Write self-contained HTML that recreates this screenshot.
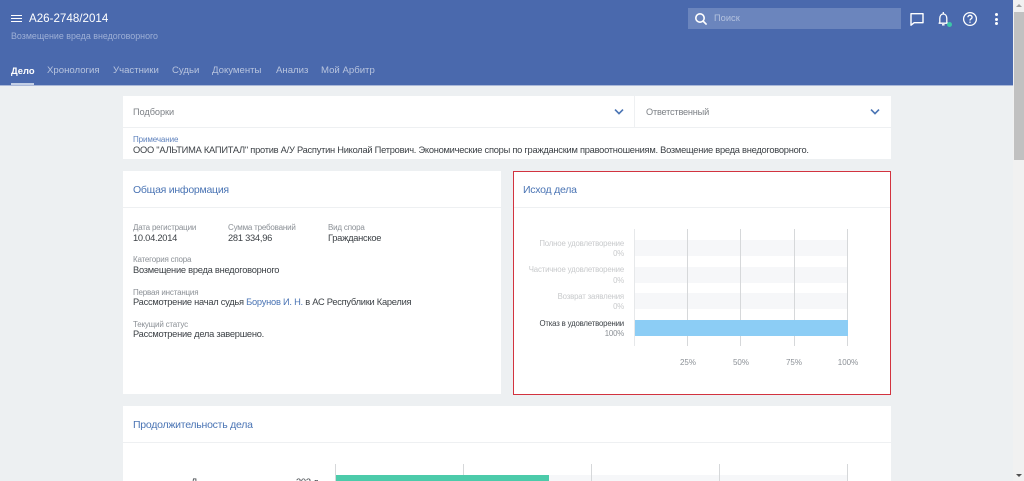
<!DOCTYPE html>
<html lang="ru"><head><meta charset="utf-8"><title>А26-2748/2014</title>
<style>
html,body{margin:0;padding:0;width:1024px;height:481px;overflow:hidden;background:#edf0f2;font-family:"Liberation Sans","Noto Sans CJK SC",sans-serif;color:#3c4146}
#w{position:absolute;left:0;top:0;width:1024px;height:481px;overflow:hidden}
.a{position:absolute;white-space:nowrap}
.box{position:absolute;background:#fff}
.h{font-size:10.5px;letter-spacing:-.25px;color:#4a74b4;line-height:14px}
.l{font-size:8px;letter-spacing:-.2px;color:#8b9096;line-height:10px}
.v{font-size:9.3px;letter-spacing:-.25px;color:#3c4146;line-height:12px}
.t{font-size:9.6px;color:#b8c4de;line-height:12px;top:65px}
.r{font-size:7.8px;letter-spacing:-.17px;line-height:10px;text-align:right;color:#c8cacc;width:200px;left:424px}
.g{position:absolute;width:1px;background:#d6d8da}
.s{position:absolute;left:635px;width:213px;height:16px;background:#f6f7f9}
.x{font-size:8px;color:#8b9096;line-height:10px;top:358px;width:40px;text-align:center}
</style></head><body><div id="w">
<div class="box" style="left:0;top:0;width:1013px;height:85px;background:#4a69ad"></div>
<div class="box" style="left:0;top:85px;width:1013px;height:1px;background:#aab8d8"></div>
<div class="box" style="left:11px;top:15px;width:11px;height:1px;background:#fff"></div>
<div class="box" style="left:11px;top:18px;width:11px;height:1px;background:#fff"></div>
<div class="box" style="left:11px;top:21px;width:11px;height:1px;background:#fff"></div>
<div class="a" style="left:29px;top:12px;font-size:11.6px;line-height:14px;color:#fff">А26-2748/2014</div>
<div class="a" style="left:11px;top:31px;font-size:8.9px;line-height:11px;color:#9eb0d6">Возмещение вреда внедоговорного</div>
<div class="a t" style="left:11px;color:#fff;font-weight:bold;font-size:9.4px">Дело</div>
<div class="box" style="left:11px;top:83px;width:23px;height:2px;background:#c3cfe6"></div>
<div class="a t" style="left:47px">Хронология</div>
<div class="a t" style="left:113px">Участники</div>
<div class="a t" style="left:172px">Судьи</div>
<div class="a t" style="left:212px">Документы</div>
<div class="a t" style="left:276px">Анализ</div>
<div class="a t" style="left:321px">Мой Арбитр</div>
<div class="box" style="left:688px;top:8px;width:213px;height:21px;background:#6b85bd"></div>
<svg class="a" style="left:693px;top:11px" width="16" height="16" viewBox="0 0 16 16" fill="none" stroke="#fff" stroke-width="1.6"><circle cx="7" cy="7" r="4.2"/><path d="M10 10l3.6 3.6"/></svg>
<div class="a" style="left:714px;top:13px;font-size:9.3px;line-height:11px;color:#b4c2de">Поиск</div>
<svg class="a" style="left:908px;top:10px" width="18" height="18" viewBox="0 0 18 18" fill="none" stroke="#fff" stroke-width="1.4"><path d="M3 3.7h12v9H6.2L3 15.2z" stroke-linejoin="round"/></svg>
<svg class="a" style="left:935px;top:10px" width="18" height="18" viewBox="0 0 18 18" fill="none" stroke="#fff" stroke-width="1.3"><path d="M3.6 13.2h9.4M4.8 13V8.4c0-2.6 1.4-4.4 3.5-4.4s3.5 1.8 3.5 4.4V13" /><path d="M8.3 2v2M7 14.8h2.6"/></svg>
<div class="box" style="left:947px;top:22px;width:5px;height:5px;border-radius:50%;background:#3cc6a8"></div>
<svg class="a" style="left:961px;top:10px" width="18" height="18" viewBox="0 0 18 18" fill="none" stroke="#fff" stroke-width="1.3"><circle cx="9" cy="9" r="6.4"/><path d="M6.9 7.3c0-1.2.9-2 2.1-2s2.1.8 2.1 1.9c0 1.5-2.1 1.6-2.1 3.3"/><path d="M9 11.6v1.2"/></svg>
<div class="box" style="left:995px;top:13px;width:3px;height:3px;border-radius:50%;background:#fff"></div>
<div class="box" style="left:995px;top:17.5px;width:3px;height:3px;border-radius:50%;background:#fff"></div>
<div class="box" style="left:995px;top:22px;width:3px;height:3px;border-radius:50%;background:#fff"></div>

<div class="box" style="left:123px;top:96px;width:768px;height:63px"></div>
<div class="box" style="left:123px;top:127px;width:768px;height:1px;background:#eef0f2"></div>
<div class="box" style="left:634px;top:96px;width:1px;height:31px;background:#eef0f2"></div>
<div class="a" style="left:133px;top:106px;font-size:9.2px;letter-spacing:-.05px;line-height:12px;color:#7d8186">Подборки</div>
<div class="a" style="left:646px;top:106px;font-size:9.2px;letter-spacing:-.2px;line-height:12px;color:#7d8186">Ответственный</div>
<svg class="a" style="left:613px;top:108px" width="12" height="8" viewBox="0 0 12 8" fill="none" stroke="#4a74b4" stroke-width="1.6"><path d="M2 1.6l4 4 4-4"/></svg>
<svg class="a" style="left:869px;top:108px" width="12" height="8" viewBox="0 0 12 8" fill="none" stroke="#4a74b4" stroke-width="1.6"><path d="M2 1.6l4 4 4-4"/></svg>
<div class="a" style="left:133px;top:135px;font-size:8px;letter-spacing:-.1px;line-height:10px;color:#5f82bd">Примечание</div>
<div class="a v" style="left:133px;top:144px">ООО "АЛЬТИМА КАПИТАЛ" против А/У Распутин Николай Петрович. Экономические споры по гражданским правоотношениям. Возмещение вреда внедоговорного.</div>

<div class="box" style="left:123px;top:171px;width:378px;height:223px"></div>
<div class="box" style="left:123px;top:207px;width:378px;height:1px;background:#eef0f2"></div>
<div class="a h" style="left:133px;top:183px">Общая информация</div>
<div class="a l" style="left:133px;top:223px">Дата регистрации</div>
<div class="a v" style="left:133px;top:232px">10.04.2014</div>
<div class="a l" style="left:228px;top:223px">Сумма требований</div>
<div class="a v" style="left:228px;top:232px">281 334,96</div>
<div class="a l" style="left:328px;top:223px">Вид спора</div>
<div class="a v" style="left:328px;top:232px">Гражданское</div>
<div class="a l" style="left:133px;top:255px">Категория спора</div>
<div class="a v" style="left:133px;top:264px">Возмещение вреда внедоговорного</div>
<div class="a l" style="left:133px;top:288px">Первая инстанция</div>
<div class="a v" style="left:133px;top:296px">Рассмотрение начал судья <span style="color:#4a74b4">Борунов И. Н.</span> в АС Республики Карелия</div>
<div class="a l" style="left:133px;top:320px">Текущий статус</div>
<div class="a v" style="left:133px;top:328px">Рассмотрение дела завершено.</div>

<div class="box" style="left:513px;top:171px;width:376px;height:222px;border:1px solid #d2333f"></div>
<div class="box" style="left:514px;top:207px;width:376px;height:1px;background:#eef0f2"></div>
<div class="a h" style="left:523px;top:183px">Исход дела</div>
<div class="s" style="top:240px"></div><div class="s" style="top:267px"></div><div class="s" style="top:293px"></div>
<div class="g" style="left:634px;top:229px;height:117px;background:#e6e8ea"></div>
<div class="g" style="left:687px;top:229px;height:117px"></div>
<div class="g" style="left:740px;top:229px;height:117px"></div>
<div class="g" style="left:794px;top:229px;height:117px"></div>
<div class="g" style="left:847px;top:229px;height:117px"></div>
<div class="box" style="left:635px;top:320px;width:213px;height:16px;background:#8ccdf5"></div>
<div class="a r" style="top:239px">Полное удовлетворение</div><div class="a r" style="top:249px">0%</div>
<div class="a r" style="top:265px">Частичное удовлетворение</div><div class="a r" style="top:276px">0%</div>
<div class="a r" style="top:292px">Возврат заявления</div><div class="a r" style="top:302px">0%</div>
<div class="a r" style="top:319px;color:#3c4146">Отказ в удовлетворении</div><div class="a r" style="top:329px;color:#8b9096">100%</div>
<div class="a x" style="left:668px">25%</div>
<div class="a x" style="left:721px">50%</div>
<div class="a x" style="left:774px">75%</div>
<div class="a x" style="left:828px">100%</div>

<div class="box" style="left:123px;top:406px;width:768px;height:75px"></div>
<div class="box" style="left:123px;top:442px;width:768px;height:1px;background:#eef0f2"></div>
<div class="a h" style="left:133px;top:418px">Продолжительность дела</div>
<div class="box" style="left:336px;top:475px;width:512px;height:6px;background:#f6f7f9"></div>
<div class="g" style="left:335px;top:464px;height:17px"></div>
<div class="g" style="left:463px;top:464px;height:17px"></div>
<div class="g" style="left:591px;top:464px;height:17px"></div>
<div class="g" style="left:719px;top:464px;height:17px"></div>
<div class="g" style="left:847px;top:464px;height:17px"></div>
<div class="box" style="left:336px;top:475px;width:213px;height:6px;background:#4ccbaa"></div>
<div class="a v" style="left:191px;top:476px">Д</div>
<div class="a v" style="left:296px;top:476px">303 д</div>

<div class="box" style="left:1013px;top:0;width:11px;height:481px;background:#f1f1f1"></div>
<div class="box" style="left:1014px;top:12px;width:10px;height:148px;background:#c1c1c1"></div>
<div class="box" style="left:1016px;top:4px;width:0;height:0;background:none;border-left:3px solid transparent;border-right:3px solid transparent;border-bottom:3px solid #a0a0a0"></div>
<div class="box" style="left:1016px;top:474px;width:0;height:0;background:none;border-left:3px solid transparent;border-right:3px solid transparent;border-top:3px solid #505050"></div>
</div></body></html>
